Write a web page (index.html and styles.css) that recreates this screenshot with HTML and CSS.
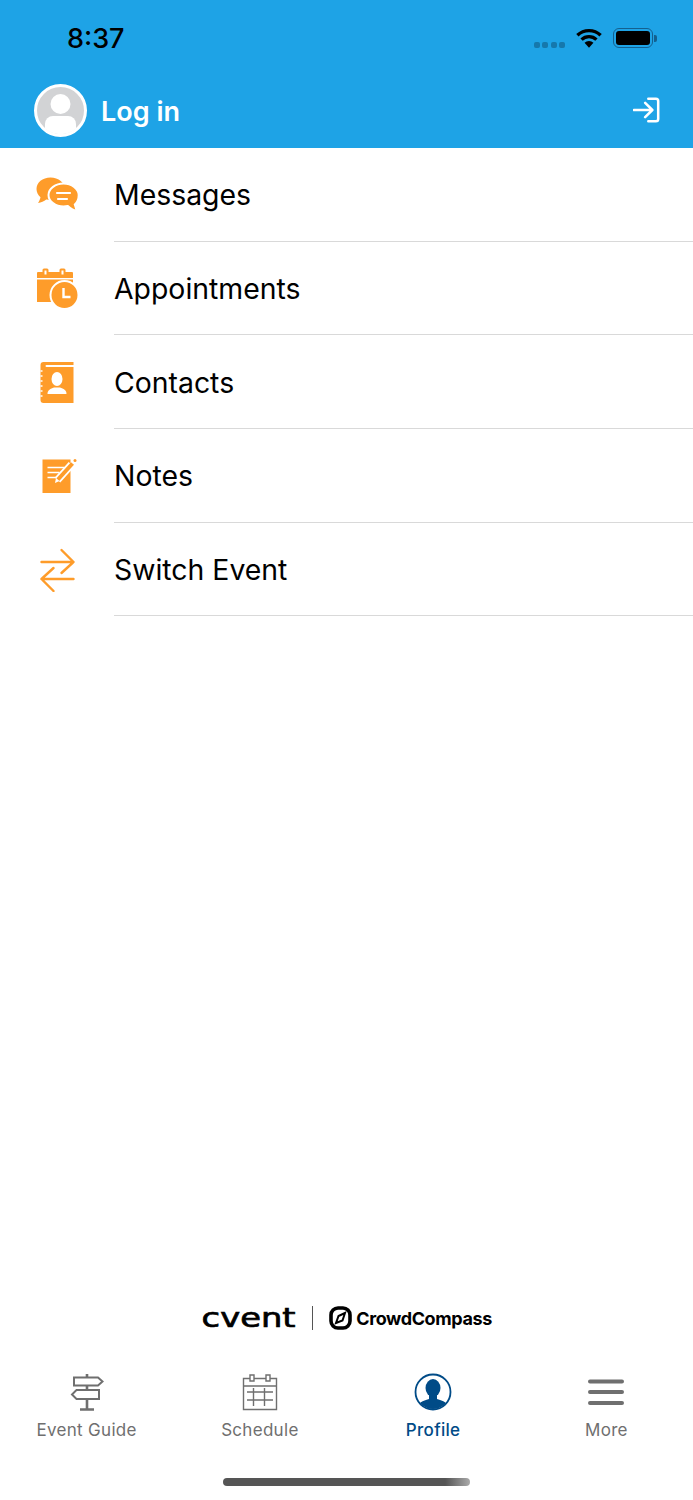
FILE: index.html
```html
<!DOCTYPE html>
<html lang="en">
  <head>
    <title>Profile</title>
    <meta charset="utf-8" />
    <meta name="viewport" content="width=device-width, initial-scale=1" />
    <link rel="stylesheet" href="styles.css">
  </head>
  <body>
    <main class="app">
      <header class="top">
        <div class="status">
          <span class="time">8:37</span>
          <div class="status-icons">
            <span class="signal"><i></i><i></i><i></i><i></i></span>
            <svg class="wifi" width="26" height="21" viewBox="0 0 28 22">
              <path d="M1.500 7.500a18 18 0 0 1 25 0" fill="none" stroke="#000" stroke-width="3.600"/>
              <path d="M6 12.200a11.500 11.500 0 0 1 16 0" fill="none" stroke="#000" stroke-width="3.600"/>
              <path d="M9.200 15.600a6.800 6.800 0 0 1 9.600 0L14 21z" fill="#000"/>
            </svg>
            <span class="battery"><span class="battery-fill"></span></span>
            <span class="battery-cap"></span>
          </div>
        </div>
        <div class="login">
          <div class="avatar">
            <svg width="53" height="53" viewBox="0 0 53 53">
              <circle cx="26.500" cy="26.500" r="25" fill="#d2d3d5" stroke="#fff" stroke-width="3"/>
              <circle cx="26.500" cy="20" r="10" fill="#fff"/>
              <path d="M11 40a8 8 0 0 1 8-8h15a8 8 0 0 1 8 8v4.500a24 24 0 0 1-31 0z" fill="#fff"/>
            </svg>
          </div>
          <span class="login-label">Log in</span>
          <svg class="login-icon" width="27" height="26" viewBox="0 0 30 28">
            <path d="M1 14h20M13.500 6l8 8-8 8" fill="none" stroke="#fff" stroke-width="2.800" stroke-linecap="round" stroke-linejoin="round"/>
            <path d="M17 1.500h8.500a2.500 2.500 0 0 1 2.500 2.500v20a2.500 2.500 0 0 1-2.500 2.500H17" fill="none" stroke="#fff" stroke-width="2.800" stroke-linecap="round"/>
          </svg>
        </div>
      </header>

      <ul class="menu">
        <li class="menu-item">
          <span class="menu-icon">
            <svg width="43" height="35" viewBox="0 0 43 35">
              <path d="M14.500.5C6.500.5.500 5.500.500 12c0 3.200 1.500 6 4 8.200-.4 2-1.300 4-2.500 5.800 3.200-.5 6-1.800 8.300-3.500 1.300.3 2.800.500 4.200.500 8 0 14.500-5 14.500-11S22.500.5 14.500.5z" fill="#fe9c2a"/>
              <path d="M27.500 6.500c-8 0-15 5.200-15 11.500s7 11.500 15 11.500c1.500 0 3-.2 4.300-.5 2.500 2.500 6 4.500 10 5.200-1.400-1.800-2.500-4-3-6.700 2.500-2.200 3.900-5.800 3.900-9.500 0-6.300-7.200-11.500-15.200-11.500z" fill="#fe9c2a" stroke="#fff" stroke-width="2"/>
              <path d="M21 16h13M22 22h9" stroke="#fff" stroke-width="2.200" stroke-linecap="round"/>
            </svg>
          </span>
          <span class="menu-label">Messages</span>
        </li>
        <li class="menu-item">
          <span class="menu-icon">
            <svg width="43" height="41" viewBox="0 0 43 41">
              <path d="M2 4h4.500V2A1.500 1.500 0 0 1 8 .5h3A1.500 1.500 0 0 1 12.500 2v2h11V2A1.500 1.500 0 0 1 25 .5h3A1.500 1.500 0 0 1 29.500 2v2H36a1 1 0 0 1 1 1v5H1V5a1 1 0 0 1 1-1z" fill="#fe9c2a"/>
              <path d="M8.500 2.500h2v4h-2zM25.500 2.500h2v4h-2z" fill="#fff"/>
              <path d="M1 11.500h36V34H1z" fill="#fe9c2a"/>
              <circle cx="28.500" cy="27" r="14" fill="#fe9c2a" stroke="#fff" stroke-width="2"/>
              <path d="M27.500 20v9h7" fill="none" stroke="#fff" stroke-width="2.400"/>
            </svg>
          </span>
          <span class="menu-label">Appointments</span>
        </li>
        <li class="menu-item">
          <span class="menu-icon">
            <svg width="36" height="42" viewBox="1.500 0 36 42">
              <path d="M5 1h30v3H8a1 1 0 0 0 0 2h27v36H5a3 3 0 0 1-3-3V4a3 3 0 0 1 3-3z" fill="#fe9c2a"/>
              <path d="M2 10h2M2 15h2M2 20h2M2 25h2M2 30h2M2 35h2" stroke="#fff" stroke-width="1.500"/>
              <ellipse cx="18.500" cy="18" rx="5.500" ry="7" fill="#fff"/>
              <path d="M9 33c0-4 3-5.500 6.500-6.500h6c3.500 1 6.500 2.500 6.500 6.500z" fill="#fff"/>
            </svg>
          </span>
          <span class="menu-label">Contacts</span>
        </li>
        <li class="menu-item">
          <span class="menu-icon">
            <svg width="38" height="36" viewBox="-2.500 0 38 36">
              <path d="M1 1.500h28V35H1z" fill="#fe9c2a"/>
              <path d="M6 9.500h17M6 14.500h12M6 19.500h9" stroke="#fff" stroke-width="1.600"/>
              <path d="M16 22L30 6.500" stroke="#fff" stroke-width="7.500"/>
              <path d="M16 22L31 5.500" stroke="#fe9c2a" stroke-width="4"/>
              <path d="M13.500 25l1-5 3.500 3z" fill="#fff"/>
              <circle cx="33.500" cy="2.500" r="1.500" fill="#fe9c2a"/>
            </svg>
          </span>
          <span class="menu-label">Notes</span>
        </li>
        <li class="menu-item">
          <span class="menu-icon">
            <svg width="36" height="44" viewBox="0 0 36 44">
              <path d="M1.500 14h32M21.500 2l12 12-12 11" fill="none" stroke="#fe9c2a" stroke-width="2.400" stroke-linecap="round" stroke-linejoin="round"/>
              <path d="M33.500 31h-32M13.500 20L1.500 31l12 12" fill="none" stroke="#fe9c2a" stroke-width="2.400" stroke-linecap="round" stroke-linejoin="round"/>
            </svg>
          </span>
          <span class="menu-label">Switch Event</span>
        </li>
      </ul>

      <div class="brand">
        <span class="brand-cvent">cvent</span>
        <span class="brand-rule"></span>
        <svg class="brand-mark" width="23" height="24" viewBox="0 0 23 24">
          <rect x="2" y="2" width="19" height="20" rx="7" fill="none" stroke="#000" stroke-width="3.600"/>
          <path d="M16 7l-2.500 7.500L7 17l2.500-7z" fill="none" stroke="#000" stroke-width="2"/>
        </svg>
        <span class="brand-cc">CrowdCompass</span>
      </div>

      <nav class="tabs">
        <div class="tab">
          <svg width="34" height="38" viewBox="0 0 34 38">
            <path d="M17 1v4M17 13v4M17 26v10M10 36.500h14" stroke="#6f6f6f" stroke-width="2.600" fill="none"/>
            <path d="M4 4.500h24l4.500 4-4.500 4H4z" fill="none" stroke="#6f6f6f" stroke-width="2"/>
            <path d="M29 17H6.500L2 21.500 6.500 26H29z" fill="none" stroke="#6f6f6f" stroke-width="2"/>
          </svg>
          <span class="tab-label">Event Guide</span>
        </div>
        <div class="tab">
          <svg width="36" height="38" viewBox="0 0 36 38">
            <path d="M1.500 5.500h33v31h-33zM1.500 13h33" fill="none" stroke="#6f6f6f" stroke-width="1.400"/>
            <path d="M8 2h4v6H8zM24 2h4v6h-4z" fill="#fff" stroke="#6f6f6f" stroke-width="1.400"/>
            <path d="M5 19h26M5 27h26M11.500 15v18M22.500 15v18" stroke="#6f6f6f" stroke-width="1.400" fill="none"/>
          </svg>
          <span class="tab-label">Schedule</span>
        </div>
        <div class="tab tab-active">
          <svg width="38" height="38" viewBox="0 0 38 38">
            <defs><clipPath id="profileClip"><circle cx="19" cy="19" r="17"/></clipPath></defs>
            <circle cx="19" cy="19" r="17.500" fill="#fff" stroke="#004b87" stroke-width="1.800"/>
            <g clip-path="url(#profileClip)" fill="#004b87">
              <ellipse cx="19" cy="15" rx="7.500" ry="9"/>
              <path d="M3 38c0-8 5-10 12-12v-4h8v4c7 2 12 4 12 12z"/>
            </g>
          </svg>
          <span class="tab-label">Profile</span>
        </div>
        <div class="tab">
          <svg width="36" height="38" viewBox="0 0 36 38">
            <path d="M2 8.500h32M2 19h32M2 30h32" stroke="#6f6f6f" stroke-width="4" stroke-linecap="round"/>
          </svg>
          <span class="tab-label">More</span>
        </div>
      </nav>

      <div class="home-bar"><span class="home-indicator"></span></div>
    </main>
  </body>
</html>
```

FILE: styles.css
```css
* {
  box-sizing: border-box;
}
body {
  margin: 0;
  background: #fff;
  font-family: Inter, "Liberation Sans", sans-serif;
}
.app {
  display: flex;
  flex-direction: column;
  width: 693px;
  height: 1500px;
  overflow: hidden;
}

.top {
  height: 148px;
  background: #1ea3e6;
}
.status {
  display: flex;
  justify-content: space-between;
  align-items: center;
  height: 76px;
  padding: 0 36px 0 67px;
}
.time {
  font-size: 27px;
  font-weight: 500;
  color: #000;
}
.status-icons {
  display: flex;
  align-items: center;
}
.signal {
  display: flex;
  gap: 2.500px;
  margin: 13px 11px 0 0;
}
.signal i {
  width: 6px;
  height: 6px;
  border-radius: 2px;
  background: #1678ac;
}
.wifi {
  margin-right: 11px;
}
.battery {
  display: flex;
  width: 40px;
  height: 20px;
  padding: 2px;
  border: 1.500px solid #14608f;
  border-radius: 6px;
}
.battery-fill {
  flex: 1;
  background: #000;
  border-radius: 3px;
}
.battery-cap {
  width: 3px;
  height: 7px;
  margin-left: 1px;
  border-radius: 0 2px 2px 0;
  background: #14608f;
}

.login {
  display: flex;
  align-items: center;
  height: 72px;
  padding: 0 33px 4px 34px;
}
.avatar {
  display: flex;
  margin-right: 14px;
}
.login-label {
  flex: 1;
  margin-top: 2px;
  font-size: 27px;
  font-weight: 600;
  color: #fff;
}

.menu {
  margin: 0;
  padding: 0;
  list-style: none;
}
.menu-item {
  display: flex;
  align-items: center;
  height: 93.700px;
  position: relative;
}
.menu-item::after {
  content: "";
  position: absolute;
  left: 114px;
  right: 0;
  bottom: 0;
  height: 1px;
  background: #d9d9d9;
}
.menu-icon {
  display: flex;
  justify-content: center;
  width: 114px;
  padding-left: 1px;
}
.menu-label {
  font-size: 28.400px;
  color: #000;
}

.brand {
  display: flex;
  align-items: center;
  justify-content: center;
  margin-top: auto;
  height: 40px;
  padding-left: 9.500px;
  color: #000;
}
.brand-cvent {
  font-family: "DejaVu Sans", sans-serif;
  font-size: 27px;
  line-height: 30px;
  transform: scaleX(1.25);
  -webkit-text-stroke: .7px #000;
}
.brand-rule {
  width: 1px;
  height: 24px;
  margin: 0 16px 0 26.500px;
  background: #555;
}
.brand-mark {
  margin-right: 4px;
}
.brand-cc {
  font-size: 18px;
  font-weight: 700;
  letter-spacing: -.4px;
}

.tabs {
  display: grid;
  grid-template-columns: repeat(4, 1fr);
  height: 103px;
  margin-top: 26px;
}
.tab {
  display: flex;
  flex-direction: column;
  align-items: center;
  padding-top: 9px;
  color: #6f6f6f;
}
.tab-label {
  margin-top: 9px;
  font-size: 17px;
  letter-spacing: .3px;
}
.tab-active {
  color: #004b87;
  font-weight: 500;
}

.home-bar {
  display: flex;
  justify-content: center;
  height: 33px;
  padding-top: 11px;
}
.home-indicator {
  width: 247px;
  height: 8px;
  border-radius: 4px;
  background: linear-gradient(90deg, #555, #555 90%, #aaa);
}
```
